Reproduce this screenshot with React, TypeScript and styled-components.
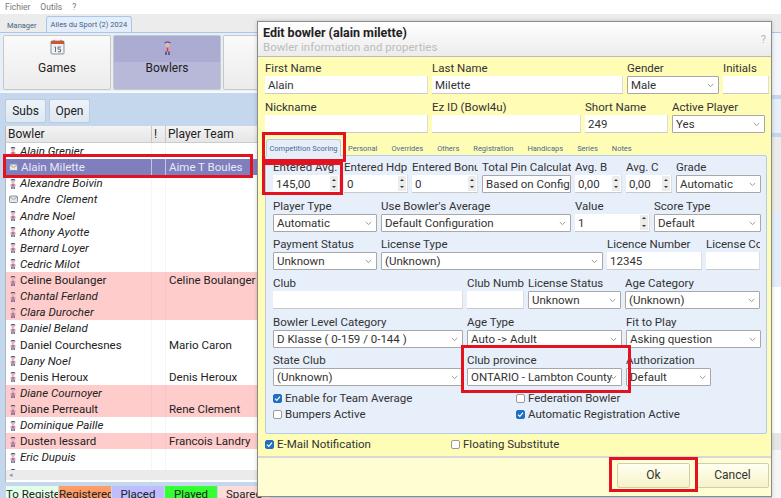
import React from 'react';
import styled, { createGlobalStyle } from 'styled-components';

const Global = createGlobalStyle`
  html, body { margin: 0; padding: 0; background: #fff; }
  * { box-sizing: border-box; }
  body { font-family: Roboto, "Noto Sans", sans-serif; font-size: 12px; color: #222; }
`;

const Frame = styled.div`
  position: relative; width: 781px; height: 498px; overflow: hidden; background: #f0f0f0;
  display: flex; flex-direction: column;
`;
const Menu = styled.div`
  height: 14px; background: #fff; display: flex; gap: 10px; padding-left: 5px;
  font-size: 8.5px; line-height: 14px; color: #777;
`;
const TabBar = styled.div`
  height: 18px; background: #ececec; display: flex; align-items: flex-end; padding-left: 7px; gap: 9px;
`;
const TopTab = styled.div<{ $on?: boolean }>`
  height: ${p => (p.$on ? 16 : 14)}px; padding: 0 ${p => (p.$on ? 4 : 0)}px; line-height: 15px; font-size: 7.5px; color: #47607f; white-space: nowrap;
  ${p => p.$on ? 'background:#e4eefa;border:1px solid #a9c6e8;border-bottom:0;border-radius:3px 3px 0 0;width:86px;' : ''}
`;
const Workspace = styled.div`
  flex: 1; display: flex; flex-direction: column; background: #c5d7ec; border-top: 1px solid #a9c6e8; min-height: 0;
`;
const BigButtons = styled.div`
  display: flex; gap: 2px; padding: 2px 3px; height: 60px; background: #e6eef8; border-bottom: 2px solid #f5f8fc;
`;
const BigButton = styled.div<{ $on?: boolean }>`
  width: 108px; height: 55px; display: flex; flex-direction: column; align-items: center;
  border: 1px solid #c8c8c8; border-radius: 2px; padding-top: 3px; font-size: 12px; color: #222;
  background: ${p => p.$on ? 'linear-gradient(#acacd2 0 50%, #b8b8d8 50%)' : 'linear-gradient(#fafafa, #ececec)'};
  span { margin-top: 5px; line-height: 16px; }
`;
const IconSlot = styled.div`height: 16px; display: flex; align-items: center;`;
const ListArea = styled.div`
  flex: 1; display: flex; flex-direction: column; min-height: 0; padding: 6px 0 0 5px;
`;
const SubBar = styled.div`display: flex; gap: 3px; height: 24px; margin-bottom: 3px;`;
const SubButton = styled.div<{ $w: number }>`
  width: ${p => p.$w}px; height: 24px; text-align: center; line-height: 23px; font-size: 12px; color: #222;
  background: linear-gradient(#eef3f9, #dde7f2); border: 1px solid #bccadb; border-radius: 2px;
`;
const Table = styled.div`
  height: 356px; width: 776px; background: #fff; border-left: 1px solid #b0b8c4; overflow: hidden; position: relative;
  display: flex; flex-direction: column; flex: none;
`;
const Cols = styled.div<{ $bg?: string; $fg?: string; $i?: boolean }>`
  display: grid; grid-template-columns: 146px 14px 1fr; height: 16.13px; flex: none; line-height: 16px; font-size: 11.5px;
  background: ${p => p.$bg ?? 'transparent'}; color: ${p => p.$fg ?? '#222'};
  font-style: ${p => p.$i ? 'italic' : 'normal'};
`;
const Head = styled(Cols)`
  height: 17px; background: linear-gradient(#f3f3f3, #e6e6e6); border-bottom: 1px solid #ccc; font-size: 12px;
`;
const HeadCell = styled.div`padding-left: 2px; border-right: 1px solid #c8c8c8;`;
const Cell = styled.div<{ $line?: boolean }>`
  display: flex; align-items: center; gap: 3px; padding-left: 3px; white-space: pre; overflow: hidden;
  border-right: 1px solid ${p => p.$line ? 'rgba(255,255,255,.55)' : 'rgba(120,120,120,.07)'};
`;
const Scrollbar = styled.div`
  position: absolute; left: 0; right: 0; bottom: 2px; height: 10px; background: #ebebeb;
  color: #999; font-size: 7px; line-height: 10px; padding-left: 3px;
`;
const Legend = styled.div`display: flex; gap: 1px; height: 14px; margin-top: 4px; margin-left: 1px;`;
const LegendItem = styled.div<{ $bg: string }>`
  width: 52px; height: 14px; background: ${p => p.$bg}; text-align: center; font-size: 11.5px; line-height: 17px; color: #222; white-space: nowrap; overflow: hidden;
`;
const Dialog = styled.div`
  position: absolute; left: 257px; top: 21px; width: 515px; height: 476px; border: 1px solid #8b8b8b;
  background: #fffcb6; display: flex; flex-direction: column; box-shadow: 0 0 4px rgba(0,0,0,.2);
`;
const DialogHead = styled.div`
  height: 35px; background: linear-gradient(#fff, #ececec); border-bottom: 1px solid #bbb; padding: 3px 5px; position: relative; flex: none;
`;
const Title = styled.div`font-weight: 700; font-size: 12.5px; line-height: 15px; color: #222;`;
const SubTitle = styled.div`font-size: 11.5px; line-height: 14px; color: #bdbdbd;`;
const Help = styled.div`position: absolute; right: 5px; top: 11px; color: #b5b5b5; font-size: 11px;`;
const Body = styled.div`flex: 1; padding: 3px 3px 0 7px; display: flex; flex-direction: column;`;
const Row = styled.div<{ $cols: string; $h: number }>`
  display: grid; grid-template-columns: ${p => p.$cols}; column-gap: 4px; height: ${p => p.$h}px; flex: none;
`;
const Field = styled.div`min-width: 0; display: flex; flex-direction: column;`;
const Label = styled.div`
  height: 16px; line-height: 16px; font-size: 11.5px; color: #333; white-space: nowrap; overflow: hidden;
`;
const Control = styled.div`
  height: 18px; background: #fff; line-height: 18px; font-size: 11.5px; color: #333; padding-left: 3px; position: relative;
  border-bottom: 1px solid #c9c9c9; border-right: 1px solid #ddd; white-space: nowrap; overflow: hidden;
`;
const Select = styled(Control)`
  border: 1px solid #a8a8a8; border-radius: 1px; padding-right: 14px; line-height: 16px;
`;
const Chevron = styled.svg`position: absolute; right: 4px; top: 6px;`;
const Spin = styled.div`
  position: absolute; right: 1px; top: 1px; width: 8px; height: 15px; background: #ececec;
  display: flex; flex-direction: column; align-items: center; justify-content: space-around;
`;
const Arrow = styled.i<{ $up?: boolean }>`
  display: block; width: 0; height: 0; border-left: 2px solid transparent; border-right: 2px solid transparent;
  ${p => p.$up ? 'border-bottom: 2px solid #333;' : 'border-top: 2px solid #333;'}
`;
const TabsStrip = styled.div`
  display: flex; align-items: flex-end; height: 17px; gap: 14px; padding-left: 1px; flex: none;
`;
const PTab = styled.div<{ $on?: boolean }>`
  font-size: 7.5px; color: #4a6a92; height: 14px; line-height: 15px; white-space: nowrap;
  ${p => p.$on ? 'height:17px;background:#e6eefa;border:1px solid #b5cbe8;border-bottom:0;border-radius:3px 3px 0 0;width:75px;text-align:center;margin-right:-7px;position:relative;top:1px;line-height:17px;' : ''}
`;
const Panel = styled.div`
  width: 502px; height: 279px; flex: none; background: #e7effb; border: 1px solid #b5cbe8; border-radius: 2px; padding: 3px 0 0 7px;
`;
const Checks = styled.div`display: grid; grid-template-columns: 243px 1fr; margin-top: 1px;`;
const CheckRow = styled.label`
  display: flex; align-items: center; gap: 3px; height: 16px; font-size: 11.5px; color: #333; white-space: nowrap;
`;
const Box = styled.span<{ $on?: boolean }>`
  width: 9px; height: 9px; border-radius: 2px; display: flex; align-items: center; justify-content: center;
  background: ${p => p.$on ? '#1f6fc4' : '#fff'}; border: 1px solid ${p => p.$on ? '#1f6fc4' : '#999'};
`;
const BottomChecks = styled.div`display: grid; grid-template-columns: 186px 1fr; margin-top: 2px; height: 16px; flex: none;`;
const Footer = styled.div`
  margin-top: auto; height: 40px; border-top: 2px solid #d8d8d8; margin-left: -7px; margin-right: -3px; flex: none;
  background: #fffdd2; display: flex; justify-content: flex-end; gap: 6px; padding: 5px 2px 0 0;
`;
const FootBtn = styled.div`
  width: 73px; height: 25px; text-align: center; line-height: 23px; font-size: 12px; color: #333;
  border: 1px solid #cfcfae; border-radius: 2px; background: linear-gradient(#fffff0, #f6f3c8);
`;
const Mark = styled.div<{ $x: number; $y: number; $w: number; $h: number }>`
  position: absolute; left: ${p => p.$x}px; top: ${p => p.$y}px; width: ${p => p.$w}px; height: ${p => p.$h}px;
  border: 3px solid #e4121f; pointer-events: none;
`;
const RightEdge = styled.div`
  position: absolute; right: 0; top: 33px; width: 9px; height: 465px;
  background: linear-gradient(#f2f5fa 0 62px, #c5d7ec 62px 66px, #e6eef8 66px 100px, #c5d7ec 100px 104px, #ececec 104px 180px, #e4eefa 180px 254px, #fff 254px 400px, #e6e6e6 400px 417px, #f6f6f6 417px);
`;

const CalendarIcon = () => (
  <svg width="15" height="16" viewBox="0 0 15 16">
    <rect x="1" y="2" width="13" height="13" rx="1" fill="#eef0f2" stroke="#8b8f96" />
    <rect x="1" y="2" width="13" height="3" fill="#d9502e" />
    <path d="M4 0.8v3M11 0.8v3" stroke="#777" />
    <path d="M4.5 8h1v5M8 8h3M8 8v2.2h2.5v2.6H8" stroke="#66707a" fill="none" />
  </svg>
);
const PersonIcon = ({ big }: { big?: boolean }) => (
  <svg width={big ? 11 : 8} height={big ? 15 : 11} viewBox="0 0 8 11">
    <path d="M1.5 2.4C2 .6 6 .6 6.5 2.4Z" fill="#3d4f9a" />
    <circle cx="4" cy="3.6" r="1.7" fill="#e9b79f" />
    <path d="M1.6 5.8h4.8v2.6H1.6z" fill="#c9a0c8" />
    <path d="M3.5 5.6h1v2.8h-1z" fill="#d23b3b" />
    <path d="M2.2 8.4h1.4V11H2.2zM4.4 8.4h1.4V11H4.4z" fill="#5c5c8f" />
  </svg>
);
const MailIcon = () => (
  <svg width="9" height="11" viewBox="0 0 9 11">
    <rect x=".5" y="2" width="8" height="6.5" rx="1" fill="#dfe9f4" stroke="#7d93b3" />
    <path d="M1 3l3.5 2.5L8 3" fill="none" stroke="#c89c4a" />
  </svg>
);
const Down = () => (
  <Chevron width="7" height="5" viewBox="0 0 7 5"><path d="M.8 1l2.7 2.6L6.2 1" fill="none" stroke="#999" /></Chevron>
);

type F = { l?: string; v?: string; k?: 's' | 'n' | 't' };
const Fld = ({ l = '', v = '', k = 't' }: F) => {
  if (k === 's') return <Field><Label>{l}</Label><Select>{v}<Down /></Select></Field>;
  if (k === 'n') return <Field><Label>{l}</Label><Control>{v}<Spin><Arrow $up /><Arrow /></Spin></Control></Field>;
  return <Field><Label>{l}</Label><Control>{v}</Control></Field>;
};

const rows: { n: string; t?: string; i?: boolean; pink?: boolean; sel?: boolean; mail?: boolean }[] = [
  { n: 'Alain Grenier', i: true },
  { n: 'Alain Milette', t: 'Aime T Boules', sel: true, mail: true },
  { n: 'Alexandre Boivin', i: true },
  { n: 'Andre  Clement', i: true, mail: true },
  { n: 'Andre Noel', i: true },
  { n: 'Athony Ayotte', i: true },
  { n: 'Bernard Loyer', i: true },
  { n: 'Cedric Milot', i: true },
  { n: 'Celine Boulanger', t: 'Celine Boulanger', pink: true },
  { n: 'Chantal Ferland', i: true, pink: true },
  { n: 'Clara Durocher', i: true, pink: true },
  { n: 'Daniel Beland', i: true },
  { n: 'Daniel Courchesnes', t: 'Mario Caron' },
  { n: 'Dany Noel', i: true },
  { n: 'Denis Heroux', t: 'Denis Heroux' },
  { n: 'Diane Cournoyer', i: true, pink: true },
  { n: 'Diane Perreault', t: 'Rene Clement', pink: true },
  { n: 'Dominique Paille', i: true },
  { n: 'Dusten lessard', t: 'Francois Landry', pink: true },
  { n: 'Eric Dupuis', i: true },
  { n: 'Eric Hale', i: true },
];

const Check = ({ on, label }: { on?: boolean; label: string }) => (
  <CheckRow>
    <Box $on={on}>{on && <svg width="7" height="7" viewBox="0 0 7 7"><path d="M1 3.6l1.8 1.8L6 1.6" fill="none" stroke="#fff" strokeWidth="1.2" /></svg>}</Box>
    {label}
  </CheckRow>
);

export default function App() {
  return (
    <Frame>
      <Global />
      <Menu><span>Fichier</span><span>Outils</span><span>?</span></Menu>
      <TabBar><TopTab>Manager</TopTab><TopTab $on>Ailes du Sport (2) 2024</TopTab></TabBar>
      <Workspace>
        <BigButtons>
          <BigButton><IconSlot><CalendarIcon /></IconSlot><span>Games</span></BigButton>
          <BigButton $on><IconSlot><PersonIcon big /></IconSlot><span>Bowlers</span></BigButton>
          <BigButton />
        </BigButtons>
        <ListArea>
          <SubBar><SubButton $w={41}>Subs</SubButton><SubButton $w={41}>Open</SubButton></SubBar>
          <Table>
            <Head><HeadCell>Bowler</HeadCell><HeadCell>!</HeadCell><HeadCell>Player Team</HeadCell></Head>
            {rows.map(r => (
              <Cols key={r.n} $bg={r.sel ? '#7f7fbd' : r.pink ? '#ffcccc' : undefined} $fg={r.sel ? '#e8e8f6' : undefined} $i={r.i}>
                <Cell $line={r.sel}>{r.mail ? <MailIcon /> : <PersonIcon />}{r.n}</Cell>
                <Cell $line={r.sel} />
                <Cell>{r.t}</Cell>
              </Cols>
            ))}
            <Scrollbar>◂</Scrollbar>
          </Table>
          <Legend>
            <LegendItem $bg="#e4ffe9">To Register</LegendItem>
            <LegendItem $bg="#ff9c66">Registered</LegendItem>
            <LegendItem $bg="#bdbdff">Placed</LegendItem>
            <LegendItem $bg="#33ff33">Played</LegendItem>
            <LegendItem $bg="#ffdcdc">Spared</LegendItem>
          </Legend>
        </ListArea>
      </Workspace>
      <RightEdge />
      <Dialog>
        <DialogHead>
          <Title>Edit bowler (alain milette)</Title>
          <SubTitle>Bowler information and properties</SubTitle>
          <Help>?</Help>
        </DialogHead>
        <Body>
          <Row $cols="163px 191px 92px 46px" $h={39}>
            <Fld l="First Name" v="Alain" /><Fld l="Last Name" v="Milette" />
            <Fld l="Gender" v="Male" k="s" /><Fld l="Initials" />
          </Row>
          <Row $cols="163px 149px 83px 93px" $h={39}>
            <Fld l="Nickname" /><Fld l="Ez ID (Bowl4u)" />
            <Fld l="Short Name" v="249" /><Fld l="Active Player" v="Yes" k="s" />
          </Row>
          <TabsStrip>
            <PTab $on>Competition Scoring</PTab>
            <PTab>Personal</PTab><PTab>Overrides</PTab><PTab>Others</PTab><PTab>Registration</PTab>
            <PTab>Handicaps</PTab><PTab>Series</PTab><PTab>Notes</PTab>
          </TabsStrip>
          <Panel>
            <Row $cols="67px 64px 66px 89px 47px 46px 85px" $h={38.7}>
              <Fld l="Entered Avg." v="145,00" k="n" /><Fld l="Entered Hdp" v="0" k="n" />
              <Fld l="Entered Bonus" v="0" k="n" /><Fld l="Total Pin Calculation" v="Based on Configuration" k="s" />
              <Fld l="Avg. B" v="0,00" k="n" /><Fld l="Avg. C" v="0,00" k="n" /><Fld l="Grade" v="Automatic" k="s" />
            </Row>
            <Row $cols="104px 190px 75px 107px" $h={38.7}>
              <Fld l="Player Type" v="Automatic" k="s" /><Fld l="Use Bowler's Average" v="Default Configuration" k="s" />
              <Fld l="Value" v="1" k="n" /><Fld l="Score Type" v="Default" k="s" />
            </Row>
            <Row $cols="104px 222px 95px 54px" $h={38.7}>
              <Fld l="Payment Status" v="Unknown" k="s" /><Fld l="License Type" v="(Unknown)" k="s" />
              <Fld l="Licence Number" v="12345" /><Fld l="License Code" />
            </Row>
            <Row $cols="190px 57px 93px 135px" $h={38.7}>
              <Fld l="Club" /><Fld l="Club Number" />
              <Fld l="License Status" v="Unknown" k="s" /><Fld l="Age Category" v="(Unknown)" k="s" />
            </Row>
            <Row $cols="190px 155px 135px" $h={38.7}>
              <Fld l="Bowler Level Category" v="D Klasse ( 0-159 / 0-144 )" k="s" />
              <Fld l="Age Type" v="Auto -> Adult" k="s" /><Fld l="Fit to Play" v="Asking question" k="s" />
            </Row>
            <Row $cols="190px 155px 85px" $h={37}>
              <Fld l="State Club" v="(Unknown)" k="s" />
              <Fld l="Club province" v="ONTARIO - Lambton County" k="s" /><Fld l="Authorization" v="Default" k="s" />
            </Row>
            <Checks>
              <Check on label="Enable for Team Average" /><Check label="Federation Bowler" />
              <Check label="Bumpers Active" /><Check on label="Automatic Registration Active" />
            </Checks>
          </Panel>
          <BottomChecks>
            <Check on label="E-Mail Notification" /><Check label="Floating Substitute" />
          </BottomChecks>
          <Footer><FootBtn>Ok</FootBtn><FootBtn>Cancel</FootBtn></Footer>
        </Body>
      </Dialog>
      <Mark $x={3} $y={154} $w={250} $h={24} />
      <Mark $x={262} $y={132} $w={84} $h={30} />
      <Mark $x={262} $y={162} $w={81} $h={33} />
      <Mark $x={461} $y={345} $w={170} $h={48} />
      <Mark $x={609} $y={457} $w={89} $h={35} />
    </Frame>
  );
}
